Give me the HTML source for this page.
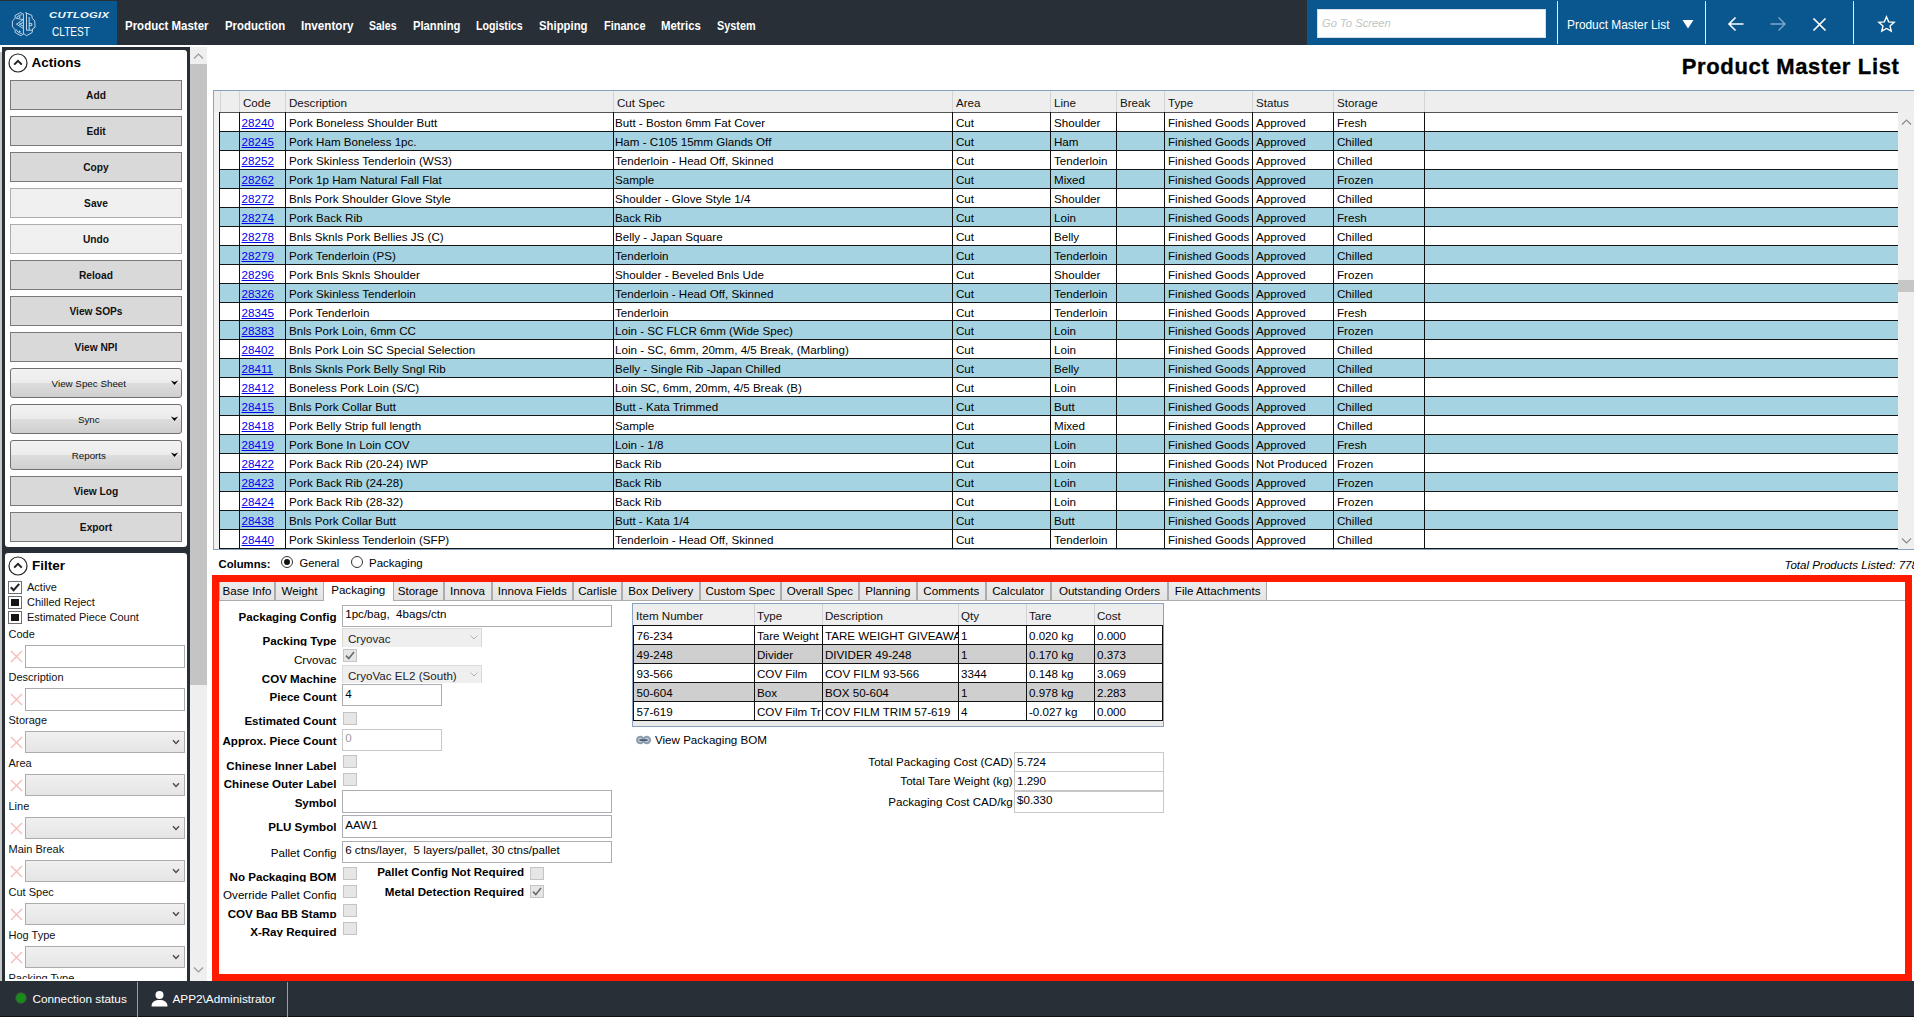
<!DOCTYPE html><html><head><meta charset="utf-8"><style>
*{box-sizing:border-box;margin:0;padding:0}
html,body{width:1914px;height:1017px;overflow:hidden;background:#fff;font-family:"Liberation Sans", sans-serif;color:#000;position:relative}
.abs{position:absolute}
.t{position:absolute;white-space:pre;line-height:1}
.btn{position:absolute;left:10px;width:172px;height:30px;background:#d9d9d9;border:1px solid #7a7a7a}
.btn.dis{background:#f0f0f0;border-color:#adadad}
.dd{position:absolute;left:10px;width:172px;height:30px;border:1px solid #707070;border-radius:3px;background:linear-gradient(#f2f2f2 0%,#ebebeb 50%,#dddddd 51%,#cfcfcf 100%)}
.tb{position:absolute;background:#fff;border:1px solid #abadb3}
.cmb{position:absolute;border:1px solid #acacac;background:linear-gradient(#f0f0f0,#e5e5e5)}
.cb{position:absolute;width:13px;height:13px;border:1px solid #bcbcbc;background:#e6e6e6}
</style></head><body>

<div class="abs" style="left:0px;top:0px;width:1914px;height:45px;background:#282f36"></div>
<div class="abs" style="left:0px;top:1px;width:117px;height:44px;background:#0a578f"></div>
<div class="abs" style="left:1307px;top:0px;width:607px;height:45px;background:#0a578f"></div>
<svg class="abs" style="left:8px;top:8px" width="32" height="32" viewBox="0 0 32 32" fill="none" stroke="#c6dbec" stroke-width="0.95" stroke-linejoin="round" stroke-linecap="round">
<path d="M15.1 6 L12.6 4.6 L7.2 7.4 L7.1 10.4 L4.4 12.9 L4.4 18.9 L7.1 21.4 L7.2 24.5 L12.9 27.7 L15.1 26.1"/>
<path d="M17.6 4.7 L23.9 7.4 L24.2 10.5 L26.7 12.6 L27.1 19.2 L24.5 20.8 L24.2 24.5 L18.6 27.7 L16.4 26.1"/>
<path d="M15.4 6.2 L15.4 26 M18.5 5.4 L18.5 22.2 L23.8 22.2"/>
<path d="M13.4 6.8 C10.5 7.4 8.6 8.8 8.4 10.4 L15.2 11.6 M15.2 11.6 L8.4 16.2 L15.2 20.4 M15.2 14.6 L11.2 16.2 L15.2 18 M8.4 21.8 C8.8 23.6 10.6 24.8 13.4 25.4"/>
<path d="M21.2 9.4 L21.2 21.6 M21.4 15.6 L23.8 15.6 L23.8 17.6 L21.4 17.6"/>
<circle cx="11.6" cy="9.1" r="0.9" fill="#c6dbec" stroke="none"/>
<circle cx="11.6" cy="23.3" r="0.9" fill="#c6dbec" stroke="none"/>
</svg>
<div class="t" style="left:49px;top:10.8px;font-size:10.5px;font-weight:bold;font-style:italic;color:#f4f7fb;letter-spacing:0.25px;transform:scale(1.07,0.8);transform-origin:0 0">CUTLOGIX</div>
<div class="t" style="left:52px;top:25.6px;font-size:12.6px;color:#fff;transform:scaleX(0.8);transform-origin:0 0">CLTEST</div>
<div class="t" style="left:125px;top:19.72px;font-size:12.5px;font-weight:bold;color:#fff;transform:scaleX(0.918);transform-origin:0 0">Product Master</div>
<div class="t" style="left:224.7px;top:19.72px;font-size:12.5px;font-weight:bold;color:#fff;transform:scaleX(0.911);transform-origin:0 0">Production</div>
<div class="t" style="left:300.5px;top:19.72px;font-size:12.5px;font-weight:bold;color:#fff;transform:scaleX(0.933);transform-origin:0 0">Inventory</div>
<div class="t" style="left:368.8px;top:19.72px;font-size:12.5px;font-weight:bold;color:#fff;transform:scaleX(0.841);transform-origin:0 0">Sales</div>
<div class="t" style="left:412.6px;top:19.72px;font-size:12.5px;font-weight:bold;color:#fff;transform:scaleX(0.898);transform-origin:0 0">Planning</div>
<div class="t" style="left:476.2px;top:19.72px;font-size:12.5px;font-weight:bold;color:#fff;transform:scaleX(0.851);transform-origin:0 0">Logistics</div>
<div class="t" style="left:539px;top:19.72px;font-size:12.5px;font-weight:bold;color:#fff;transform:scaleX(0.908);transform-origin:0 0">Shipping</div>
<div class="t" style="left:603.5px;top:19.72px;font-size:12.5px;font-weight:bold;color:#fff;transform:scaleX(0.879);transform-origin:0 0">Finance</div>
<div class="t" style="left:661.3px;top:19.72px;font-size:12.5px;font-weight:bold;color:#fff;transform:scaleX(0.911);transform-origin:0 0">Metrics</div>
<div class="t" style="left:717.2px;top:19.72px;font-size:12.5px;font-weight:bold;color:#fff;transform:scaleX(0.867);transform-origin:0 0">System</div>
<div class="abs" style="left:1317px;top:9px;width:229px;height:29px;background:#fff;border:1px solid #d6dde6"></div>
<div class="t" style="font-size:11.2px;font-weight:normal;color:#000;top:18.02px;left:1322px;font-style:italic;color:#c3c3c3;">Go To Screen</div>
<div class="abs" style="left:1557px;top:1px;width:1px;height:43px;background:#e8eef5"></div>
<div class="abs" style="left:1705px;top:1px;width:1px;height:43px;background:#e8eef5"></div>
<div class="abs" style="left:1853px;top:1px;width:1px;height:43px;background:#e8eef5"></div>
<div class="t" style="font-size:11.9px;font-weight:normal;color:#fff;top:19.73px;left:1567px;">Product Master List</div>
<svg class="abs" style="left:1682px;top:19px" width="12" height="10" viewBox="0 0 12 10"><path d="M0.5 1 L11.5 1 L6 9.5 Z" fill="#fff"/></svg>
<svg class="abs" style="left:1726px;top:15px" width="20" height="18" viewBox="0 0 20 18" fill="none" stroke="#fff" stroke-width="1.6"><path d="M17.5 9 L3 9 M9.5 2.5 L3 9 L9.5 15.5"/></svg>
<svg class="abs" style="left:1768px;top:15px" width="20" height="18" viewBox="0 0 20 18" fill="none" stroke="#7fa6c9" stroke-width="1.4"><path d="M2.5 9 L17 9 M10.5 2.5 L17 9 L10.5 15.5"/></svg>
<svg class="abs" style="left:1811px;top:16px" width="17" height="17" viewBox="0 0 17 17" fill="none" stroke="#fff" stroke-width="1.7"><path d="M2.5 2.5 L14.5 14.5 M14.5 2.5 L2.5 14.5"/></svg>
<svg class="abs" style="left:1877px;top:15px" width="19" height="18" viewBox="0 0 21 20" fill="none" stroke="#fff" stroke-width="1.5" stroke-linejoin="miter"><path d="M10.5 2 L12.9 7.6 L19 8.1 L14.4 12.1 L15.8 18 L10.5 14.9 L5.2 18 L6.6 12.1 L2 8.1 L8.1 7.6 Z"/></svg>
<div class="abs" style="left:0px;top:981px;width:1914px;height:36px;background:#282f36"></div>
<div class="abs" style="left:0px;top:1016px;width:1914px;height:1px;background:#111"></div>
<div class="abs" style="left:15px;top:992px;width:12px;height:12px;border-radius:50%;background:#1a8a1a;border:1px solid #3c4148"></div>
<div class="t" style="font-size:11.8px;font-weight:normal;color:#fff;top:994.01px;left:32.4px;">Connection status</div>
<div class="abs" style="left:137px;top:982px;width:1px;height:35px;background:#9aa0a6"></div>
<svg class="abs" style="left:151px;top:990px" width="17" height="17" viewBox="0 0 17 17" fill="#fff"><circle cx="8.5" cy="5" r="4"/><path d="M0.5 16.5 C0.5 11.5 4 10 8.5 10 C13 10 16.5 11.5 16.5 16.5 Z"/></svg>
<div class="t" style="font-size:11.8px;font-weight:normal;color:#fff;top:994.01px;left:172.4px;">APP2\Administrator</div>
<div class="abs" style="left:287px;top:982px;width:1px;height:35px;background:#9aa0a6"></div>
<div class="abs" style="left:0px;top:52px;width:2px;height:929px;background:#c8c8c8"></div>
<div class="abs" style="left:2px;top:47px;width:188px;height:934px;background:#272e35"></div>
<div class="abs" style="left:5px;top:50px;width:182px;height:497px;background:#fff;border-radius:3px"></div>
<div class="abs" style="left:5px;top:553px;width:182px;height:428px;background:#fff;border-radius:3px 3px 0 0"></div>
<div class="abs" style="left:190px;top:47px;width:17px;height:934px;background:#efefef"></div>
<div class="abs" style="left:190px;top:64px;width:17px;height:621px;background:#c4c4c4"></div>
<svg class="abs" style="left:193px;top:52px" width="11" height="8" viewBox="0 0 11 8" fill="none" stroke="#9a9a9a" stroke-width="1.2"><path d="M1 6.5 L5.5 2 L10 6.5"/></svg>
<svg class="abs" style="left:193px;top:966px" width="11" height="8" viewBox="0 0 11 8" fill="none" stroke="#9a9a9a" stroke-width="1.2"><path d="M1 1.5 L5.5 6 L10 1.5"/></svg>
<svg class="abs" style="left:8px;top:53px" width="20" height="20" viewBox="0 0 20 20" fill="none" stroke="#222" stroke-width="1.2"><circle cx="10" cy="10" r="9"/><path d="M6.2 11.6 L10 7.8 L13.8 11.6" stroke-width="2"/></svg>
<div class="t" style="font-size:13.5px;font-weight:bold;color:#000;top:56.47px;left:31.5px;">Actions</div>
<div class="btn" style="top:80px"></div>
<div class="t" style="font-size:10.2px;font-weight:bold;color:#111;top:90.87px;left:-204px;width:600px;text-align:center;">Add</div>
<div class="btn" style="top:116px"></div>
<div class="t" style="font-size:10.2px;font-weight:bold;color:#111;top:126.87px;left:-204px;width:600px;text-align:center;">Edit</div>
<div class="btn" style="top:152px"></div>
<div class="t" style="font-size:10.2px;font-weight:bold;color:#111;top:162.87px;left:-204px;width:600px;text-align:center;">Copy</div>
<div class="btn dis" style="top:188px"></div>
<div class="t" style="font-size:10.2px;font-weight:bold;color:#111;top:198.87px;left:-204px;width:600px;text-align:center;">Save</div>
<div class="btn dis" style="top:224px"></div>
<div class="t" style="font-size:10.2px;font-weight:bold;color:#111;top:234.87px;left:-204px;width:600px;text-align:center;">Undo</div>
<div class="btn" style="top:260px"></div>
<div class="t" style="font-size:10.2px;font-weight:bold;color:#111;top:270.87px;left:-204px;width:600px;text-align:center;">Reload</div>
<div class="btn" style="top:296px"></div>
<div class="t" style="font-size:10.2px;font-weight:bold;color:#111;top:306.87px;left:-204px;width:600px;text-align:center;">View SOPs</div>
<div class="btn" style="top:332px"></div>
<div class="t" style="font-size:10.2px;font-weight:bold;color:#111;top:342.87px;left:-204px;width:600px;text-align:center;">View NPI</div>
<div class="dd" style="top:368px"></div>
<div class="t" style="font-size:9.8px;font-weight:normal;color:#111;top:378.70px;left:-211.2px;width:600px;text-align:center;">View Spec Sheet</div>
<svg class="abs" style="left:170px;top:380px" width="9" height="6" viewBox="0 0 9 6"><path d="M0.8 0.6 L4.5 1.9 L8.2 0.6 L4.5 5.0 Z" fill="#000"/></svg>
<div class="dd" style="top:404px"></div>
<div class="t" style="font-size:9.8px;font-weight:normal;color:#111;top:414.70px;left:-211.2px;width:600px;text-align:center;">Sync</div>
<svg class="abs" style="left:170px;top:416px" width="9" height="6" viewBox="0 0 9 6"><path d="M0.8 0.6 L4.5 1.9 L8.2 0.6 L4.5 5.0 Z" fill="#000"/></svg>
<div class="dd" style="top:440px"></div>
<div class="t" style="font-size:9.8px;font-weight:normal;color:#111;top:450.70px;left:-211.2px;width:600px;text-align:center;">Reports</div>
<svg class="abs" style="left:170px;top:452px" width="9" height="6" viewBox="0 0 9 6"><path d="M0.8 0.6 L4.5 1.9 L8.2 0.6 L4.5 5.0 Z" fill="#000"/></svg>
<div class="btn" style="top:476px"></div>
<div class="t" style="font-size:10.2px;font-weight:bold;color:#111;top:486.87px;left:-204px;width:600px;text-align:center;">View Log</div>
<div class="btn" style="top:512px"></div>
<div class="t" style="font-size:10.2px;font-weight:bold;color:#111;top:522.87px;left:-204px;width:600px;text-align:center;">Export</div>
<svg class="abs" style="left:8px;top:556px" width="20" height="20" viewBox="0 0 20 20" fill="none" stroke="#222" stroke-width="1.2"><circle cx="10" cy="10" r="9"/><path d="M6.2 11.6 L10 7.8 L13.8 11.6" stroke-width="2"/></svg>
<div class="t" style="font-size:13.5px;font-weight:bold;color:#000;top:559.37px;left:32px;">Filter</div>
<div class="abs" style="left:8px;top:581px;width:14px;height:13px;border:1px solid #6e6e6e;background:#fff"></div>
<svg class="abs" style="left:8px;top:581px" width="14" height="13" viewBox="0 0 14 13" fill="none" stroke="#222" stroke-width="2"><path d="M2.8 6.2 L5.6 9.2 L11.2 2.8"/></svg>
<div class="t" style="font-size:11px;font-weight:normal;color:#111;top:581.89px;left:27px;">Active</div>
<div class="abs" style="left:8px;top:596px;width:14px;height:13px;border:1px solid #6e6e6e;background:#fff"></div>
<div class="abs" style="left:11px;top:599px;width:8px;height:7px;background:#151515"></div>
<div class="t" style="font-size:11px;font-weight:normal;color:#111;top:596.89px;left:27px;">Chilled Reject</div>
<div class="abs" style="left:8px;top:611px;width:14px;height:13px;border:1px solid #6e6e6e;background:#fff"></div>
<div class="abs" style="left:11px;top:614px;width:8px;height:7px;background:#151515"></div>
<div class="t" style="font-size:11px;font-weight:normal;color:#111;top:611.89px;left:27px;">Estimated Piece Count</div>
<div class="t" style="font-size:11px;font-weight:normal;color:#111;top:629.49px;left:8.5px;">Code</div>
<div class="tb" style="left:25px;top:645px;width:160px;height:23px;border-color:#a9abb0"></div>
<svg class="abs" style="left:10px;top:650px" width="13" height="13" viewBox="0 0 13 13" fill="none" stroke="#f7b9b5" stroke-width="1.3"><path d="M1 1 L12 12 M12 1 L1 12"/></svg>
<div class="t" style="font-size:11px;font-weight:normal;color:#111;top:672.49px;left:8.5px;">Description</div>
<div class="tb" style="left:25px;top:688px;width:160px;height:23px;border-color:#a9abb0"></div>
<svg class="abs" style="left:10px;top:693px" width="13" height="13" viewBox="0 0 13 13" fill="none" stroke="#f7b9b5" stroke-width="1.3"><path d="M1 1 L12 12 M12 1 L1 12"/></svg>
<div class="t" style="font-size:11px;font-weight:normal;color:#111;top:715.49px;left:8.5px;">Storage</div>
<div class="cmb" style="left:25px;top:731px;width:160px;height:22px"></div>
<svg class="abs" style="left:172px;top:739px" width="8" height="6" viewBox="0 0 8 6" fill="none" stroke="#4a4a4a" stroke-width="1.4"><path d="M1 1.2 L4 4.4 L7 1.2"/></svg>
<svg class="abs" style="left:10px;top:736px" width="13" height="13" viewBox="0 0 13 13" fill="none" stroke="#f7b9b5" stroke-width="1.3"><path d="M1 1 L12 12 M12 1 L1 12"/></svg>
<div class="t" style="font-size:11px;font-weight:normal;color:#111;top:758.49px;left:8.5px;">Area</div>
<div class="cmb" style="left:25px;top:774px;width:160px;height:22px"></div>
<svg class="abs" style="left:172px;top:782px" width="8" height="6" viewBox="0 0 8 6" fill="none" stroke="#4a4a4a" stroke-width="1.4"><path d="M1 1.2 L4 4.4 L7 1.2"/></svg>
<svg class="abs" style="left:10px;top:779px" width="13" height="13" viewBox="0 0 13 13" fill="none" stroke="#f7b9b5" stroke-width="1.3"><path d="M1 1 L12 12 M12 1 L1 12"/></svg>
<div class="t" style="font-size:11px;font-weight:normal;color:#111;top:801.49px;left:8.5px;">Line</div>
<div class="cmb" style="left:25px;top:817px;width:160px;height:22px"></div>
<svg class="abs" style="left:172px;top:825px" width="8" height="6" viewBox="0 0 8 6" fill="none" stroke="#4a4a4a" stroke-width="1.4"><path d="M1 1.2 L4 4.4 L7 1.2"/></svg>
<svg class="abs" style="left:10px;top:822px" width="13" height="13" viewBox="0 0 13 13" fill="none" stroke="#f7b9b5" stroke-width="1.3"><path d="M1 1 L12 12 M12 1 L1 12"/></svg>
<div class="t" style="font-size:11px;font-weight:normal;color:#111;top:844.49px;left:8.5px;">Main Break</div>
<div class="cmb" style="left:25px;top:860px;width:160px;height:22px"></div>
<svg class="abs" style="left:172px;top:868px" width="8" height="6" viewBox="0 0 8 6" fill="none" stroke="#4a4a4a" stroke-width="1.4"><path d="M1 1.2 L4 4.4 L7 1.2"/></svg>
<svg class="abs" style="left:10px;top:865px" width="13" height="13" viewBox="0 0 13 13" fill="none" stroke="#f7b9b5" stroke-width="1.3"><path d="M1 1 L12 12 M12 1 L1 12"/></svg>
<div class="t" style="font-size:11px;font-weight:normal;color:#111;top:887.49px;left:8.5px;">Cut Spec</div>
<div class="cmb" style="left:25px;top:903px;width:160px;height:22px"></div>
<svg class="abs" style="left:172px;top:911px" width="8" height="6" viewBox="0 0 8 6" fill="none" stroke="#4a4a4a" stroke-width="1.4"><path d="M1 1.2 L4 4.4 L7 1.2"/></svg>
<svg class="abs" style="left:10px;top:908px" width="13" height="13" viewBox="0 0 13 13" fill="none" stroke="#f7b9b5" stroke-width="1.3"><path d="M1 1 L12 12 M12 1 L1 12"/></svg>
<div class="t" style="font-size:11px;font-weight:normal;color:#111;top:930.49px;left:8.5px;">Hog Type</div>
<div class="cmb" style="left:25px;top:946px;width:160px;height:22px"></div>
<svg class="abs" style="left:172px;top:954px" width="8" height="6" viewBox="0 0 8 6" fill="none" stroke="#4a4a4a" stroke-width="1.4"><path d="M1 1.2 L4 4.4 L7 1.2"/></svg>
<svg class="abs" style="left:10px;top:951px" width="13" height="13" viewBox="0 0 13 13" fill="none" stroke="#f7b9b5" stroke-width="1.3"><path d="M1 1 L12 12 M12 1 L1 12"/></svg>
<div class="abs" style="left:5px;top:955px;width:182px;height:24.3px;overflow:hidden">
<div class="t" style="left:3.5px;top:18.49px;font-size:11px;color:#111">Packing Type</div>
</div>
<div class="t" style="font-size:22px;font-weight:bold;color:#000;top:55.68px;right:14.400000000000091px;text-align:right;letter-spacing:0.66px;-webkit-text-stroke:0.35px #000;">Product Master List</div>
<div class="abs" style="left:213px;top:90px;width:1701px;height:460px;border:1px solid #8aa2bf;border-right:none;background:#fff"></div>
<div class="abs" style="left:214px;top:91px;width:1700px;height:21px;background:#eeeeee"></div>
<div class="abs" style="left:214px;top:112px;width:6px;height:437px;background:#f2f2f2"></div>
<div class="abs" style="left:220px;top:91px;width:1px;height:21px;background:#d4d4d4"></div>
<div class="abs" style="left:239px;top:91px;width:1px;height:21px;background:#d4d4d4"></div>
<div class="abs" style="left:285px;top:91px;width:1px;height:21px;background:#d4d4d4"></div>
<div class="abs" style="left:613px;top:91px;width:1px;height:21px;background:#d4d4d4"></div>
<div class="abs" style="left:952px;top:91px;width:1px;height:21px;background:#d4d4d4"></div>
<div class="abs" style="left:1050px;top:91px;width:1px;height:21px;background:#d4d4d4"></div>
<div class="abs" style="left:1116px;top:91px;width:1px;height:21px;background:#d4d4d4"></div>
<div class="abs" style="left:1164px;top:91px;width:1px;height:21px;background:#d4d4d4"></div>
<div class="abs" style="left:1252px;top:91px;width:1px;height:21px;background:#d4d4d4"></div>
<div class="abs" style="left:1333px;top:91px;width:1px;height:21px;background:#d4d4d4"></div>
<div class="abs" style="left:1424px;top:91px;width:1px;height:21px;background:#d4d4d4"></div>
<div class="t" style="font-size:11.6px;font-weight:normal;color:#111;top:97.18px;left:243px;">Code</div>
<div class="t" style="font-size:11.6px;font-weight:normal;color:#111;top:97.18px;left:289px;">Description</div>
<div class="t" style="font-size:11.6px;font-weight:normal;color:#111;top:97.18px;left:617px;">Cut Spec</div>
<div class="t" style="font-size:11.6px;font-weight:normal;color:#111;top:97.18px;left:956px;">Area</div>
<div class="t" style="font-size:11.6px;font-weight:normal;color:#111;top:97.18px;left:1054px;">Line</div>
<div class="t" style="font-size:11.6px;font-weight:normal;color:#111;top:97.18px;left:1120px;">Break</div>
<div class="t" style="font-size:11.6px;font-weight:normal;color:#111;top:97.18px;left:1168px;">Type</div>
<div class="t" style="font-size:11.6px;font-weight:normal;color:#111;top:97.18px;left:1256px;">Status</div>
<div class="t" style="font-size:11.6px;font-weight:normal;color:#111;top:97.18px;left:1337px;">Storage</div>
<div class="abs" style="left:220px;top:131px;width:1678px;height:19px;background:#a6d3e1"></div>
<div class="abs" style="left:220px;top:169px;width:1678px;height:19px;background:#a6d3e1"></div>
<div class="abs" style="left:220px;top:207px;width:1678px;height:19px;background:#a6d3e1"></div>
<div class="abs" style="left:220px;top:245px;width:1678px;height:19px;background:#a6d3e1"></div>
<div class="abs" style="left:220px;top:283px;width:1678px;height:19px;background:#a6d3e1"></div>
<div class="abs" style="left:220px;top:320px;width:1678px;height:19px;background:#a6d3e1"></div>
<div class="abs" style="left:220px;top:358px;width:1678px;height:19px;background:#a6d3e1"></div>
<div class="abs" style="left:220px;top:396px;width:1678px;height:19px;background:#a6d3e1"></div>
<div class="abs" style="left:220px;top:434px;width:1678px;height:19px;background:#a6d3e1"></div>
<div class="abs" style="left:220px;top:472px;width:1678px;height:19px;background:#a6d3e1"></div>
<div class="abs" style="left:220px;top:510px;width:1678px;height:19px;background:#a6d3e1"></div>
<div class="t" style="font-size:11.6px;font-weight:normal;color:#0000ee;top:117.18px;left:241.6px;text-decoration:underline;">28240</div>
<div class="abs" style="left:286px;top:113px;width:327px;height:18px;overflow:hidden">
<div class="t" style="left:3px;top:4.18px;font-size:11.6px;color:#000">Pork Boneless Shoulder Butt</div>
</div>
<div class="abs" style="left:614px;top:113px;width:338px;height:18px;overflow:hidden">
<div class="t" style="left:1px;top:4.18px;font-size:11.6px;color:#000">Butt - Boston 6mm Fat Cover</div>
</div>
<div class="abs" style="left:953px;top:113px;width:97px;height:18px;overflow:hidden">
<div class="t" style="left:3px;top:4.18px;font-size:11.6px;color:#000">Cut</div>
</div>
<div class="abs" style="left:1051px;top:113px;width:65px;height:18px;overflow:hidden">
<div class="t" style="left:3px;top:4.18px;font-size:11.6px;color:#000">Shoulder</div>
</div>
<div class="abs" style="left:1165px;top:113px;width:87px;height:18px;overflow:hidden">
<div class="t" style="left:3px;top:4.18px;font-size:11.6px;color:#000">Finished Goods</div>
</div>
<div class="abs" style="left:1253px;top:113px;width:80px;height:18px;overflow:hidden">
<div class="t" style="left:3px;top:4.18px;font-size:11.6px;color:#000">Approved</div>
</div>
<div class="abs" style="left:1334px;top:113px;width:90px;height:18px;overflow:hidden">
<div class="t" style="left:3px;top:4.18px;font-size:11.6px;color:#000">Fresh</div>
</div>
<div class="t" style="font-size:11.6px;font-weight:normal;color:#0000ee;top:136.18px;left:241.6px;text-decoration:underline;">28245</div>
<div class="abs" style="left:286px;top:132px;width:327px;height:18px;overflow:hidden">
<div class="t" style="left:3px;top:4.18px;font-size:11.6px;color:#000">Pork Ham Boneless 1pc.</div>
</div>
<div class="abs" style="left:614px;top:132px;width:338px;height:18px;overflow:hidden">
<div class="t" style="left:1px;top:4.18px;font-size:11.6px;color:#000">Ham - C105 15mm Glands Off</div>
</div>
<div class="abs" style="left:953px;top:132px;width:97px;height:18px;overflow:hidden">
<div class="t" style="left:3px;top:4.18px;font-size:11.6px;color:#000">Cut</div>
</div>
<div class="abs" style="left:1051px;top:132px;width:65px;height:18px;overflow:hidden">
<div class="t" style="left:3px;top:4.18px;font-size:11.6px;color:#000">Ham</div>
</div>
<div class="abs" style="left:1165px;top:132px;width:87px;height:18px;overflow:hidden">
<div class="t" style="left:3px;top:4.18px;font-size:11.6px;color:#000">Finished Goods</div>
</div>
<div class="abs" style="left:1253px;top:132px;width:80px;height:18px;overflow:hidden">
<div class="t" style="left:3px;top:4.18px;font-size:11.6px;color:#000">Approved</div>
</div>
<div class="abs" style="left:1334px;top:132px;width:90px;height:18px;overflow:hidden">
<div class="t" style="left:3px;top:4.18px;font-size:11.6px;color:#000">Chilled</div>
</div>
<div class="t" style="font-size:11.6px;font-weight:normal;color:#0000ee;top:155.18px;left:241.6px;text-decoration:underline;">28252</div>
<div class="abs" style="left:286px;top:151px;width:327px;height:18px;overflow:hidden">
<div class="t" style="left:3px;top:4.18px;font-size:11.6px;color:#000">Pork Skinless Tenderloin (WS3)</div>
</div>
<div class="abs" style="left:614px;top:151px;width:338px;height:18px;overflow:hidden">
<div class="t" style="left:1px;top:4.18px;font-size:11.6px;color:#000">Tenderloin - Head Off, Skinned</div>
</div>
<div class="abs" style="left:953px;top:151px;width:97px;height:18px;overflow:hidden">
<div class="t" style="left:3px;top:4.18px;font-size:11.6px;color:#000">Cut</div>
</div>
<div class="abs" style="left:1051px;top:151px;width:65px;height:18px;overflow:hidden">
<div class="t" style="left:3px;top:4.18px;font-size:11.6px;color:#000">Tenderloin</div>
</div>
<div class="abs" style="left:1165px;top:151px;width:87px;height:18px;overflow:hidden">
<div class="t" style="left:3px;top:4.18px;font-size:11.6px;color:#000">Finished Goods</div>
</div>
<div class="abs" style="left:1253px;top:151px;width:80px;height:18px;overflow:hidden">
<div class="t" style="left:3px;top:4.18px;font-size:11.6px;color:#000">Approved</div>
</div>
<div class="abs" style="left:1334px;top:151px;width:90px;height:18px;overflow:hidden">
<div class="t" style="left:3px;top:4.18px;font-size:11.6px;color:#000">Chilled</div>
</div>
<div class="t" style="font-size:11.6px;font-weight:normal;color:#0000ee;top:174.18px;left:241.6px;text-decoration:underline;">28262</div>
<div class="abs" style="left:286px;top:170px;width:327px;height:18px;overflow:hidden">
<div class="t" style="left:3px;top:4.18px;font-size:11.6px;color:#000">Pork 1p Ham Natural Fall Flat</div>
</div>
<div class="abs" style="left:614px;top:170px;width:338px;height:18px;overflow:hidden">
<div class="t" style="left:1px;top:4.18px;font-size:11.6px;color:#000">Sample</div>
</div>
<div class="abs" style="left:953px;top:170px;width:97px;height:18px;overflow:hidden">
<div class="t" style="left:3px;top:4.18px;font-size:11.6px;color:#000">Cut</div>
</div>
<div class="abs" style="left:1051px;top:170px;width:65px;height:18px;overflow:hidden">
<div class="t" style="left:3px;top:4.18px;font-size:11.6px;color:#000">Mixed</div>
</div>
<div class="abs" style="left:1165px;top:170px;width:87px;height:18px;overflow:hidden">
<div class="t" style="left:3px;top:4.18px;font-size:11.6px;color:#000">Finished Goods</div>
</div>
<div class="abs" style="left:1253px;top:170px;width:80px;height:18px;overflow:hidden">
<div class="t" style="left:3px;top:4.18px;font-size:11.6px;color:#000">Approved</div>
</div>
<div class="abs" style="left:1334px;top:170px;width:90px;height:18px;overflow:hidden">
<div class="t" style="left:3px;top:4.18px;font-size:11.6px;color:#000">Frozen</div>
</div>
<div class="t" style="font-size:11.6px;font-weight:normal;color:#0000ee;top:193.18px;left:241.6px;text-decoration:underline;">28272</div>
<div class="abs" style="left:286px;top:189px;width:327px;height:18px;overflow:hidden">
<div class="t" style="left:3px;top:4.18px;font-size:11.6px;color:#000">Bnls Pork Shoulder Glove Style</div>
</div>
<div class="abs" style="left:614px;top:189px;width:338px;height:18px;overflow:hidden">
<div class="t" style="left:1px;top:4.18px;font-size:11.6px;color:#000">Shoulder - Glove Style 1/4</div>
</div>
<div class="abs" style="left:953px;top:189px;width:97px;height:18px;overflow:hidden">
<div class="t" style="left:3px;top:4.18px;font-size:11.6px;color:#000">Cut</div>
</div>
<div class="abs" style="left:1051px;top:189px;width:65px;height:18px;overflow:hidden">
<div class="t" style="left:3px;top:4.18px;font-size:11.6px;color:#000">Shoulder</div>
</div>
<div class="abs" style="left:1165px;top:189px;width:87px;height:18px;overflow:hidden">
<div class="t" style="left:3px;top:4.18px;font-size:11.6px;color:#000">Finished Goods</div>
</div>
<div class="abs" style="left:1253px;top:189px;width:80px;height:18px;overflow:hidden">
<div class="t" style="left:3px;top:4.18px;font-size:11.6px;color:#000">Approved</div>
</div>
<div class="abs" style="left:1334px;top:189px;width:90px;height:18px;overflow:hidden">
<div class="t" style="left:3px;top:4.18px;font-size:11.6px;color:#000">Chilled</div>
</div>
<div class="t" style="font-size:11.6px;font-weight:normal;color:#0000ee;top:212.18px;left:241.6px;text-decoration:underline;">28274</div>
<div class="abs" style="left:286px;top:208px;width:327px;height:18px;overflow:hidden">
<div class="t" style="left:3px;top:4.18px;font-size:11.6px;color:#000">Pork Back Rib</div>
</div>
<div class="abs" style="left:614px;top:208px;width:338px;height:18px;overflow:hidden">
<div class="t" style="left:1px;top:4.18px;font-size:11.6px;color:#000">Back Rib</div>
</div>
<div class="abs" style="left:953px;top:208px;width:97px;height:18px;overflow:hidden">
<div class="t" style="left:3px;top:4.18px;font-size:11.6px;color:#000">Cut</div>
</div>
<div class="abs" style="left:1051px;top:208px;width:65px;height:18px;overflow:hidden">
<div class="t" style="left:3px;top:4.18px;font-size:11.6px;color:#000">Loin</div>
</div>
<div class="abs" style="left:1165px;top:208px;width:87px;height:18px;overflow:hidden">
<div class="t" style="left:3px;top:4.18px;font-size:11.6px;color:#000">Finished Goods</div>
</div>
<div class="abs" style="left:1253px;top:208px;width:80px;height:18px;overflow:hidden">
<div class="t" style="left:3px;top:4.18px;font-size:11.6px;color:#000">Approved</div>
</div>
<div class="abs" style="left:1334px;top:208px;width:90px;height:18px;overflow:hidden">
<div class="t" style="left:3px;top:4.18px;font-size:11.6px;color:#000">Fresh</div>
</div>
<div class="t" style="font-size:11.6px;font-weight:normal;color:#0000ee;top:231.18px;left:241.6px;text-decoration:underline;">28278</div>
<div class="abs" style="left:286px;top:227px;width:327px;height:18px;overflow:hidden">
<div class="t" style="left:3px;top:4.18px;font-size:11.6px;color:#000">Bnls Sknls Pork Bellies JS (C)</div>
</div>
<div class="abs" style="left:614px;top:227px;width:338px;height:18px;overflow:hidden">
<div class="t" style="left:1px;top:4.18px;font-size:11.6px;color:#000">Belly - Japan Square</div>
</div>
<div class="abs" style="left:953px;top:227px;width:97px;height:18px;overflow:hidden">
<div class="t" style="left:3px;top:4.18px;font-size:11.6px;color:#000">Cut</div>
</div>
<div class="abs" style="left:1051px;top:227px;width:65px;height:18px;overflow:hidden">
<div class="t" style="left:3px;top:4.18px;font-size:11.6px;color:#000">Belly</div>
</div>
<div class="abs" style="left:1165px;top:227px;width:87px;height:18px;overflow:hidden">
<div class="t" style="left:3px;top:4.18px;font-size:11.6px;color:#000">Finished Goods</div>
</div>
<div class="abs" style="left:1253px;top:227px;width:80px;height:18px;overflow:hidden">
<div class="t" style="left:3px;top:4.18px;font-size:11.6px;color:#000">Approved</div>
</div>
<div class="abs" style="left:1334px;top:227px;width:90px;height:18px;overflow:hidden">
<div class="t" style="left:3px;top:4.18px;font-size:11.6px;color:#000">Chilled</div>
</div>
<div class="t" style="font-size:11.6px;font-weight:normal;color:#0000ee;top:250.18px;left:241.6px;text-decoration:underline;">28279</div>
<div class="abs" style="left:286px;top:246px;width:327px;height:18px;overflow:hidden">
<div class="t" style="left:3px;top:4.18px;font-size:11.6px;color:#000">Pork Tenderloin (PS)</div>
</div>
<div class="abs" style="left:614px;top:246px;width:338px;height:18px;overflow:hidden">
<div class="t" style="left:1px;top:4.18px;font-size:11.6px;color:#000">Tenderloin</div>
</div>
<div class="abs" style="left:953px;top:246px;width:97px;height:18px;overflow:hidden">
<div class="t" style="left:3px;top:4.18px;font-size:11.6px;color:#000">Cut</div>
</div>
<div class="abs" style="left:1051px;top:246px;width:65px;height:18px;overflow:hidden">
<div class="t" style="left:3px;top:4.18px;font-size:11.6px;color:#000">Tenderloin</div>
</div>
<div class="abs" style="left:1165px;top:246px;width:87px;height:18px;overflow:hidden">
<div class="t" style="left:3px;top:4.18px;font-size:11.6px;color:#000">Finished Goods</div>
</div>
<div class="abs" style="left:1253px;top:246px;width:80px;height:18px;overflow:hidden">
<div class="t" style="left:3px;top:4.18px;font-size:11.6px;color:#000">Approved</div>
</div>
<div class="abs" style="left:1334px;top:246px;width:90px;height:18px;overflow:hidden">
<div class="t" style="left:3px;top:4.18px;font-size:11.6px;color:#000">Chilled</div>
</div>
<div class="t" style="font-size:11.6px;font-weight:normal;color:#0000ee;top:269.18px;left:241.6px;text-decoration:underline;">28296</div>
<div class="abs" style="left:286px;top:265px;width:327px;height:18px;overflow:hidden">
<div class="t" style="left:3px;top:4.18px;font-size:11.6px;color:#000">Pork Bnls Sknls Shoulder</div>
</div>
<div class="abs" style="left:614px;top:265px;width:338px;height:18px;overflow:hidden">
<div class="t" style="left:1px;top:4.18px;font-size:11.6px;color:#000">Shoulder - Beveled Bnls Ude</div>
</div>
<div class="abs" style="left:953px;top:265px;width:97px;height:18px;overflow:hidden">
<div class="t" style="left:3px;top:4.18px;font-size:11.6px;color:#000">Cut</div>
</div>
<div class="abs" style="left:1051px;top:265px;width:65px;height:18px;overflow:hidden">
<div class="t" style="left:3px;top:4.18px;font-size:11.6px;color:#000">Shoulder</div>
</div>
<div class="abs" style="left:1165px;top:265px;width:87px;height:18px;overflow:hidden">
<div class="t" style="left:3px;top:4.18px;font-size:11.6px;color:#000">Finished Goods</div>
</div>
<div class="abs" style="left:1253px;top:265px;width:80px;height:18px;overflow:hidden">
<div class="t" style="left:3px;top:4.18px;font-size:11.6px;color:#000">Approved</div>
</div>
<div class="abs" style="left:1334px;top:265px;width:90px;height:18px;overflow:hidden">
<div class="t" style="left:3px;top:4.18px;font-size:11.6px;color:#000">Frozen</div>
</div>
<div class="t" style="font-size:11.6px;font-weight:normal;color:#0000ee;top:288.18px;left:241.6px;text-decoration:underline;">28326</div>
<div class="abs" style="left:286px;top:284px;width:327px;height:18px;overflow:hidden">
<div class="t" style="left:3px;top:4.18px;font-size:11.6px;color:#000">Pork Skinless Tenderloin</div>
</div>
<div class="abs" style="left:614px;top:284px;width:338px;height:18px;overflow:hidden">
<div class="t" style="left:1px;top:4.18px;font-size:11.6px;color:#000">Tenderloin - Head Off, Skinned</div>
</div>
<div class="abs" style="left:953px;top:284px;width:97px;height:18px;overflow:hidden">
<div class="t" style="left:3px;top:4.18px;font-size:11.6px;color:#000">Cut</div>
</div>
<div class="abs" style="left:1051px;top:284px;width:65px;height:18px;overflow:hidden">
<div class="t" style="left:3px;top:4.18px;font-size:11.6px;color:#000">Tenderloin</div>
</div>
<div class="abs" style="left:1165px;top:284px;width:87px;height:18px;overflow:hidden">
<div class="t" style="left:3px;top:4.18px;font-size:11.6px;color:#000">Finished Goods</div>
</div>
<div class="abs" style="left:1253px;top:284px;width:80px;height:18px;overflow:hidden">
<div class="t" style="left:3px;top:4.18px;font-size:11.6px;color:#000">Approved</div>
</div>
<div class="abs" style="left:1334px;top:284px;width:90px;height:18px;overflow:hidden">
<div class="t" style="left:3px;top:4.18px;font-size:11.6px;color:#000">Chilled</div>
</div>
<div class="t" style="font-size:11.6px;font-weight:normal;color:#0000ee;top:307.18px;left:241.6px;text-decoration:underline;">28345</div>
<div class="abs" style="left:286px;top:303px;width:327px;height:18px;overflow:hidden">
<div class="t" style="left:3px;top:4.18px;font-size:11.6px;color:#000">Pork Tenderloin</div>
</div>
<div class="abs" style="left:614px;top:303px;width:338px;height:18px;overflow:hidden">
<div class="t" style="left:1px;top:4.18px;font-size:11.6px;color:#000">Tenderloin</div>
</div>
<div class="abs" style="left:953px;top:303px;width:97px;height:18px;overflow:hidden">
<div class="t" style="left:3px;top:4.18px;font-size:11.6px;color:#000">Cut</div>
</div>
<div class="abs" style="left:1051px;top:303px;width:65px;height:18px;overflow:hidden">
<div class="t" style="left:3px;top:4.18px;font-size:11.6px;color:#000">Tenderloin</div>
</div>
<div class="abs" style="left:1165px;top:303px;width:87px;height:18px;overflow:hidden">
<div class="t" style="left:3px;top:4.18px;font-size:11.6px;color:#000">Finished Goods</div>
</div>
<div class="abs" style="left:1253px;top:303px;width:80px;height:18px;overflow:hidden">
<div class="t" style="left:3px;top:4.18px;font-size:11.6px;color:#000">Approved</div>
</div>
<div class="abs" style="left:1334px;top:303px;width:90px;height:18px;overflow:hidden">
<div class="t" style="left:3px;top:4.18px;font-size:11.6px;color:#000">Fresh</div>
</div>
<div class="t" style="font-size:11.6px;font-weight:normal;color:#0000ee;top:325.18px;left:241.6px;text-decoration:underline;">28383</div>
<div class="abs" style="left:286px;top:321px;width:327px;height:18px;overflow:hidden">
<div class="t" style="left:3px;top:4.18px;font-size:11.6px;color:#000">Bnls Pork Loin, 6mm CC</div>
</div>
<div class="abs" style="left:614px;top:321px;width:338px;height:18px;overflow:hidden">
<div class="t" style="left:1px;top:4.18px;font-size:11.6px;color:#000">Loin - SC FLCR 6mm (Wide Spec)</div>
</div>
<div class="abs" style="left:953px;top:321px;width:97px;height:18px;overflow:hidden">
<div class="t" style="left:3px;top:4.18px;font-size:11.6px;color:#000">Cut</div>
</div>
<div class="abs" style="left:1051px;top:321px;width:65px;height:18px;overflow:hidden">
<div class="t" style="left:3px;top:4.18px;font-size:11.6px;color:#000">Loin</div>
</div>
<div class="abs" style="left:1165px;top:321px;width:87px;height:18px;overflow:hidden">
<div class="t" style="left:3px;top:4.18px;font-size:11.6px;color:#000">Finished Goods</div>
</div>
<div class="abs" style="left:1253px;top:321px;width:80px;height:18px;overflow:hidden">
<div class="t" style="left:3px;top:4.18px;font-size:11.6px;color:#000">Approved</div>
</div>
<div class="abs" style="left:1334px;top:321px;width:90px;height:18px;overflow:hidden">
<div class="t" style="left:3px;top:4.18px;font-size:11.6px;color:#000">Frozen</div>
</div>
<div class="t" style="font-size:11.6px;font-weight:normal;color:#0000ee;top:344.18px;left:241.6px;text-decoration:underline;">28402</div>
<div class="abs" style="left:286px;top:340px;width:327px;height:18px;overflow:hidden">
<div class="t" style="left:3px;top:4.18px;font-size:11.6px;color:#000">Bnls Pork Loin SC Special Selection</div>
</div>
<div class="abs" style="left:614px;top:340px;width:338px;height:18px;overflow:hidden">
<div class="t" style="left:1px;top:4.18px;font-size:11.6px;color:#000">Loin - SC, 6mm, 20mm, 4/5 Break, (Marbling)</div>
</div>
<div class="abs" style="left:953px;top:340px;width:97px;height:18px;overflow:hidden">
<div class="t" style="left:3px;top:4.18px;font-size:11.6px;color:#000">Cut</div>
</div>
<div class="abs" style="left:1051px;top:340px;width:65px;height:18px;overflow:hidden">
<div class="t" style="left:3px;top:4.18px;font-size:11.6px;color:#000">Loin</div>
</div>
<div class="abs" style="left:1165px;top:340px;width:87px;height:18px;overflow:hidden">
<div class="t" style="left:3px;top:4.18px;font-size:11.6px;color:#000">Finished Goods</div>
</div>
<div class="abs" style="left:1253px;top:340px;width:80px;height:18px;overflow:hidden">
<div class="t" style="left:3px;top:4.18px;font-size:11.6px;color:#000">Approved</div>
</div>
<div class="abs" style="left:1334px;top:340px;width:90px;height:18px;overflow:hidden">
<div class="t" style="left:3px;top:4.18px;font-size:11.6px;color:#000">Chilled</div>
</div>
<div class="t" style="font-size:11.6px;font-weight:normal;color:#0000ee;top:363.18px;left:241.6px;text-decoration:underline;">28411</div>
<div class="abs" style="left:286px;top:359px;width:327px;height:18px;overflow:hidden">
<div class="t" style="left:3px;top:4.18px;font-size:11.6px;color:#000">Bnls Sknls Pork Belly Sngl Rib</div>
</div>
<div class="abs" style="left:614px;top:359px;width:338px;height:18px;overflow:hidden">
<div class="t" style="left:1px;top:4.18px;font-size:11.6px;color:#000">Belly - Single Rib -Japan Chilled</div>
</div>
<div class="abs" style="left:953px;top:359px;width:97px;height:18px;overflow:hidden">
<div class="t" style="left:3px;top:4.18px;font-size:11.6px;color:#000">Cut</div>
</div>
<div class="abs" style="left:1051px;top:359px;width:65px;height:18px;overflow:hidden">
<div class="t" style="left:3px;top:4.18px;font-size:11.6px;color:#000">Belly</div>
</div>
<div class="abs" style="left:1165px;top:359px;width:87px;height:18px;overflow:hidden">
<div class="t" style="left:3px;top:4.18px;font-size:11.6px;color:#000">Finished Goods</div>
</div>
<div class="abs" style="left:1253px;top:359px;width:80px;height:18px;overflow:hidden">
<div class="t" style="left:3px;top:4.18px;font-size:11.6px;color:#000">Approved</div>
</div>
<div class="abs" style="left:1334px;top:359px;width:90px;height:18px;overflow:hidden">
<div class="t" style="left:3px;top:4.18px;font-size:11.6px;color:#000">Chilled</div>
</div>
<div class="t" style="font-size:11.6px;font-weight:normal;color:#0000ee;top:382.18px;left:241.6px;text-decoration:underline;">28412</div>
<div class="abs" style="left:286px;top:378px;width:327px;height:18px;overflow:hidden">
<div class="t" style="left:3px;top:4.18px;font-size:11.6px;color:#000">Boneless Pork Loin (S/C)</div>
</div>
<div class="abs" style="left:614px;top:378px;width:338px;height:18px;overflow:hidden">
<div class="t" style="left:1px;top:4.18px;font-size:11.6px;color:#000">Loin SC, 6mm, 20mm, 4/5 Break (B)</div>
</div>
<div class="abs" style="left:953px;top:378px;width:97px;height:18px;overflow:hidden">
<div class="t" style="left:3px;top:4.18px;font-size:11.6px;color:#000">Cut</div>
</div>
<div class="abs" style="left:1051px;top:378px;width:65px;height:18px;overflow:hidden">
<div class="t" style="left:3px;top:4.18px;font-size:11.6px;color:#000">Loin</div>
</div>
<div class="abs" style="left:1165px;top:378px;width:87px;height:18px;overflow:hidden">
<div class="t" style="left:3px;top:4.18px;font-size:11.6px;color:#000">Finished Goods</div>
</div>
<div class="abs" style="left:1253px;top:378px;width:80px;height:18px;overflow:hidden">
<div class="t" style="left:3px;top:4.18px;font-size:11.6px;color:#000">Approved</div>
</div>
<div class="abs" style="left:1334px;top:378px;width:90px;height:18px;overflow:hidden">
<div class="t" style="left:3px;top:4.18px;font-size:11.6px;color:#000">Chilled</div>
</div>
<div class="t" style="font-size:11.6px;font-weight:normal;color:#0000ee;top:401.18px;left:241.6px;text-decoration:underline;">28415</div>
<div class="abs" style="left:286px;top:397px;width:327px;height:18px;overflow:hidden">
<div class="t" style="left:3px;top:4.18px;font-size:11.6px;color:#000">Bnls Pork Collar Butt</div>
</div>
<div class="abs" style="left:614px;top:397px;width:338px;height:18px;overflow:hidden">
<div class="t" style="left:1px;top:4.18px;font-size:11.6px;color:#000">Butt - Kata Trimmed</div>
</div>
<div class="abs" style="left:953px;top:397px;width:97px;height:18px;overflow:hidden">
<div class="t" style="left:3px;top:4.18px;font-size:11.6px;color:#000">Cut</div>
</div>
<div class="abs" style="left:1051px;top:397px;width:65px;height:18px;overflow:hidden">
<div class="t" style="left:3px;top:4.18px;font-size:11.6px;color:#000">Butt</div>
</div>
<div class="abs" style="left:1165px;top:397px;width:87px;height:18px;overflow:hidden">
<div class="t" style="left:3px;top:4.18px;font-size:11.6px;color:#000">Finished Goods</div>
</div>
<div class="abs" style="left:1253px;top:397px;width:80px;height:18px;overflow:hidden">
<div class="t" style="left:3px;top:4.18px;font-size:11.6px;color:#000">Approved</div>
</div>
<div class="abs" style="left:1334px;top:397px;width:90px;height:18px;overflow:hidden">
<div class="t" style="left:3px;top:4.18px;font-size:11.6px;color:#000">Chilled</div>
</div>
<div class="t" style="font-size:11.6px;font-weight:normal;color:#0000ee;top:420.18px;left:241.6px;text-decoration:underline;">28418</div>
<div class="abs" style="left:286px;top:416px;width:327px;height:18px;overflow:hidden">
<div class="t" style="left:3px;top:4.18px;font-size:11.6px;color:#000">Pork Belly Strip full length</div>
</div>
<div class="abs" style="left:614px;top:416px;width:338px;height:18px;overflow:hidden">
<div class="t" style="left:1px;top:4.18px;font-size:11.6px;color:#000">Sample</div>
</div>
<div class="abs" style="left:953px;top:416px;width:97px;height:18px;overflow:hidden">
<div class="t" style="left:3px;top:4.18px;font-size:11.6px;color:#000">Cut</div>
</div>
<div class="abs" style="left:1051px;top:416px;width:65px;height:18px;overflow:hidden">
<div class="t" style="left:3px;top:4.18px;font-size:11.6px;color:#000">Mixed</div>
</div>
<div class="abs" style="left:1165px;top:416px;width:87px;height:18px;overflow:hidden">
<div class="t" style="left:3px;top:4.18px;font-size:11.6px;color:#000">Finished Goods</div>
</div>
<div class="abs" style="left:1253px;top:416px;width:80px;height:18px;overflow:hidden">
<div class="t" style="left:3px;top:4.18px;font-size:11.6px;color:#000">Approved</div>
</div>
<div class="abs" style="left:1334px;top:416px;width:90px;height:18px;overflow:hidden">
<div class="t" style="left:3px;top:4.18px;font-size:11.6px;color:#000">Chilled</div>
</div>
<div class="t" style="font-size:11.6px;font-weight:normal;color:#0000ee;top:439.18px;left:241.6px;text-decoration:underline;">28419</div>
<div class="abs" style="left:286px;top:435px;width:327px;height:18px;overflow:hidden">
<div class="t" style="left:3px;top:4.18px;font-size:11.6px;color:#000">Pork Bone In Loin COV</div>
</div>
<div class="abs" style="left:614px;top:435px;width:338px;height:18px;overflow:hidden">
<div class="t" style="left:1px;top:4.18px;font-size:11.6px;color:#000">Loin - 1/8</div>
</div>
<div class="abs" style="left:953px;top:435px;width:97px;height:18px;overflow:hidden">
<div class="t" style="left:3px;top:4.18px;font-size:11.6px;color:#000">Cut</div>
</div>
<div class="abs" style="left:1051px;top:435px;width:65px;height:18px;overflow:hidden">
<div class="t" style="left:3px;top:4.18px;font-size:11.6px;color:#000">Loin</div>
</div>
<div class="abs" style="left:1165px;top:435px;width:87px;height:18px;overflow:hidden">
<div class="t" style="left:3px;top:4.18px;font-size:11.6px;color:#000">Finished Goods</div>
</div>
<div class="abs" style="left:1253px;top:435px;width:80px;height:18px;overflow:hidden">
<div class="t" style="left:3px;top:4.18px;font-size:11.6px;color:#000">Approved</div>
</div>
<div class="abs" style="left:1334px;top:435px;width:90px;height:18px;overflow:hidden">
<div class="t" style="left:3px;top:4.18px;font-size:11.6px;color:#000">Fresh</div>
</div>
<div class="t" style="font-size:11.6px;font-weight:normal;color:#0000ee;top:458.18px;left:241.6px;text-decoration:underline;">28422</div>
<div class="abs" style="left:286px;top:454px;width:327px;height:18px;overflow:hidden">
<div class="t" style="left:3px;top:4.18px;font-size:11.6px;color:#000">Pork Back Rib (20-24) IWP</div>
</div>
<div class="abs" style="left:614px;top:454px;width:338px;height:18px;overflow:hidden">
<div class="t" style="left:1px;top:4.18px;font-size:11.6px;color:#000">Back Rib</div>
</div>
<div class="abs" style="left:953px;top:454px;width:97px;height:18px;overflow:hidden">
<div class="t" style="left:3px;top:4.18px;font-size:11.6px;color:#000">Cut</div>
</div>
<div class="abs" style="left:1051px;top:454px;width:65px;height:18px;overflow:hidden">
<div class="t" style="left:3px;top:4.18px;font-size:11.6px;color:#000">Loin</div>
</div>
<div class="abs" style="left:1165px;top:454px;width:87px;height:18px;overflow:hidden">
<div class="t" style="left:3px;top:4.18px;font-size:11.6px;color:#000">Finished Goods</div>
</div>
<div class="abs" style="left:1253px;top:454px;width:80px;height:18px;overflow:hidden">
<div class="t" style="left:3px;top:4.18px;font-size:11.6px;color:#000">Not Produced</div>
</div>
<div class="abs" style="left:1334px;top:454px;width:90px;height:18px;overflow:hidden">
<div class="t" style="left:3px;top:4.18px;font-size:11.6px;color:#000">Frozen</div>
</div>
<div class="t" style="font-size:11.6px;font-weight:normal;color:#0000ee;top:477.18px;left:241.6px;text-decoration:underline;">28423</div>
<div class="abs" style="left:286px;top:473px;width:327px;height:18px;overflow:hidden">
<div class="t" style="left:3px;top:4.18px;font-size:11.6px;color:#000">Pork Back Rib (24-28)</div>
</div>
<div class="abs" style="left:614px;top:473px;width:338px;height:18px;overflow:hidden">
<div class="t" style="left:1px;top:4.18px;font-size:11.6px;color:#000">Back Rib</div>
</div>
<div class="abs" style="left:953px;top:473px;width:97px;height:18px;overflow:hidden">
<div class="t" style="left:3px;top:4.18px;font-size:11.6px;color:#000">Cut</div>
</div>
<div class="abs" style="left:1051px;top:473px;width:65px;height:18px;overflow:hidden">
<div class="t" style="left:3px;top:4.18px;font-size:11.6px;color:#000">Loin</div>
</div>
<div class="abs" style="left:1165px;top:473px;width:87px;height:18px;overflow:hidden">
<div class="t" style="left:3px;top:4.18px;font-size:11.6px;color:#000">Finished Goods</div>
</div>
<div class="abs" style="left:1253px;top:473px;width:80px;height:18px;overflow:hidden">
<div class="t" style="left:3px;top:4.18px;font-size:11.6px;color:#000">Approved</div>
</div>
<div class="abs" style="left:1334px;top:473px;width:90px;height:18px;overflow:hidden">
<div class="t" style="left:3px;top:4.18px;font-size:11.6px;color:#000">Frozen</div>
</div>
<div class="t" style="font-size:11.6px;font-weight:normal;color:#0000ee;top:496.18px;left:241.6px;text-decoration:underline;">28424</div>
<div class="abs" style="left:286px;top:492px;width:327px;height:18px;overflow:hidden">
<div class="t" style="left:3px;top:4.18px;font-size:11.6px;color:#000">Pork Back Rib (28-32)</div>
</div>
<div class="abs" style="left:614px;top:492px;width:338px;height:18px;overflow:hidden">
<div class="t" style="left:1px;top:4.18px;font-size:11.6px;color:#000">Back Rib</div>
</div>
<div class="abs" style="left:953px;top:492px;width:97px;height:18px;overflow:hidden">
<div class="t" style="left:3px;top:4.18px;font-size:11.6px;color:#000">Cut</div>
</div>
<div class="abs" style="left:1051px;top:492px;width:65px;height:18px;overflow:hidden">
<div class="t" style="left:3px;top:4.18px;font-size:11.6px;color:#000">Loin</div>
</div>
<div class="abs" style="left:1165px;top:492px;width:87px;height:18px;overflow:hidden">
<div class="t" style="left:3px;top:4.18px;font-size:11.6px;color:#000">Finished Goods</div>
</div>
<div class="abs" style="left:1253px;top:492px;width:80px;height:18px;overflow:hidden">
<div class="t" style="left:3px;top:4.18px;font-size:11.6px;color:#000">Approved</div>
</div>
<div class="abs" style="left:1334px;top:492px;width:90px;height:18px;overflow:hidden">
<div class="t" style="left:3px;top:4.18px;font-size:11.6px;color:#000">Frozen</div>
</div>
<div class="t" style="font-size:11.6px;font-weight:normal;color:#0000ee;top:515.18px;left:241.6px;text-decoration:underline;">28438</div>
<div class="abs" style="left:286px;top:511px;width:327px;height:18px;overflow:hidden">
<div class="t" style="left:3px;top:4.18px;font-size:11.6px;color:#000">Bnls Pork Collar Butt</div>
</div>
<div class="abs" style="left:614px;top:511px;width:338px;height:18px;overflow:hidden">
<div class="t" style="left:1px;top:4.18px;font-size:11.6px;color:#000">Butt - Kata 1/4</div>
</div>
<div class="abs" style="left:953px;top:511px;width:97px;height:18px;overflow:hidden">
<div class="t" style="left:3px;top:4.18px;font-size:11.6px;color:#000">Cut</div>
</div>
<div class="abs" style="left:1051px;top:511px;width:65px;height:18px;overflow:hidden">
<div class="t" style="left:3px;top:4.18px;font-size:11.6px;color:#000">Butt</div>
</div>
<div class="abs" style="left:1165px;top:511px;width:87px;height:18px;overflow:hidden">
<div class="t" style="left:3px;top:4.18px;font-size:11.6px;color:#000">Finished Goods</div>
</div>
<div class="abs" style="left:1253px;top:511px;width:80px;height:18px;overflow:hidden">
<div class="t" style="left:3px;top:4.18px;font-size:11.6px;color:#000">Approved</div>
</div>
<div class="abs" style="left:1334px;top:511px;width:90px;height:18px;overflow:hidden">
<div class="t" style="left:3px;top:4.18px;font-size:11.6px;color:#000">Chilled</div>
</div>
<div class="t" style="font-size:11.6px;font-weight:normal;color:#0000ee;top:534.18px;left:241.6px;text-decoration:underline;">28440</div>
<div class="abs" style="left:286px;top:530px;width:327px;height:18px;overflow:hidden">
<div class="t" style="left:3px;top:4.18px;font-size:11.6px;color:#000">Pork Skinless Tenderloin (SFP)</div>
</div>
<div class="abs" style="left:614px;top:530px;width:338px;height:18px;overflow:hidden">
<div class="t" style="left:1px;top:4.18px;font-size:11.6px;color:#000">Tenderloin - Head Off, Skinned</div>
</div>
<div class="abs" style="left:953px;top:530px;width:97px;height:18px;overflow:hidden">
<div class="t" style="left:3px;top:4.18px;font-size:11.6px;color:#000">Cut</div>
</div>
<div class="abs" style="left:1051px;top:530px;width:65px;height:18px;overflow:hidden">
<div class="t" style="left:3px;top:4.18px;font-size:11.6px;color:#000">Tenderloin</div>
</div>
<div class="abs" style="left:1165px;top:530px;width:87px;height:18px;overflow:hidden">
<div class="t" style="left:3px;top:4.18px;font-size:11.6px;color:#000">Finished Goods</div>
</div>
<div class="abs" style="left:1253px;top:530px;width:80px;height:18px;overflow:hidden">
<div class="t" style="left:3px;top:4.18px;font-size:11.6px;color:#000">Approved</div>
</div>
<div class="abs" style="left:1334px;top:530px;width:90px;height:18px;overflow:hidden">
<div class="t" style="left:3px;top:4.18px;font-size:11.6px;color:#000">Chilled</div>
</div>
<div class="abs" style="left:219px;top:112px;width:1679px;height:1px;background:#555"></div>
<div class="abs" style="left:219px;top:131px;width:1679px;height:1px;background:#151515"></div>
<div class="abs" style="left:219px;top:150px;width:1679px;height:1px;background:#151515"></div>
<div class="abs" style="left:219px;top:169px;width:1679px;height:1px;background:#151515"></div>
<div class="abs" style="left:219px;top:188px;width:1679px;height:1px;background:#151515"></div>
<div class="abs" style="left:219px;top:207px;width:1679px;height:1px;background:#151515"></div>
<div class="abs" style="left:219px;top:226px;width:1679px;height:1px;background:#151515"></div>
<div class="abs" style="left:219px;top:245px;width:1679px;height:1px;background:#151515"></div>
<div class="abs" style="left:219px;top:264px;width:1679px;height:1px;background:#151515"></div>
<div class="abs" style="left:219px;top:283px;width:1679px;height:1px;background:#151515"></div>
<div class="abs" style="left:219px;top:302px;width:1679px;height:1px;background:#151515"></div>
<div class="abs" style="left:219px;top:320px;width:1679px;height:1px;background:#151515"></div>
<div class="abs" style="left:219px;top:339px;width:1679px;height:1px;background:#151515"></div>
<div class="abs" style="left:219px;top:358px;width:1679px;height:1px;background:#151515"></div>
<div class="abs" style="left:219px;top:377px;width:1679px;height:1px;background:#151515"></div>
<div class="abs" style="left:219px;top:396px;width:1679px;height:1px;background:#151515"></div>
<div class="abs" style="left:219px;top:415px;width:1679px;height:1px;background:#151515"></div>
<div class="abs" style="left:219px;top:434px;width:1679px;height:1px;background:#151515"></div>
<div class="abs" style="left:219px;top:453px;width:1679px;height:1px;background:#151515"></div>
<div class="abs" style="left:219px;top:472px;width:1679px;height:1px;background:#151515"></div>
<div class="abs" style="left:219px;top:491px;width:1679px;height:1px;background:#151515"></div>
<div class="abs" style="left:219px;top:510px;width:1679px;height:1px;background:#151515"></div>
<div class="abs" style="left:219px;top:529px;width:1679px;height:1px;background:#151515"></div>
<div class="abs" style="left:219px;top:548px;width:1679px;height:1px;background:#151515"></div>
<div class="abs" style="left:219px;top:112px;width:1px;height:437px;background:#111"></div>
<div class="abs" style="left:239px;top:112px;width:1px;height:437px;background:#111"></div>
<div class="abs" style="left:285px;top:112px;width:1px;height:437px;background:#111"></div>
<div class="abs" style="left:613px;top:112px;width:1px;height:437px;background:#111"></div>
<div class="abs" style="left:952px;top:112px;width:1px;height:437px;background:#111"></div>
<div class="abs" style="left:1050px;top:112px;width:1px;height:437px;background:#111"></div>
<div class="abs" style="left:1116px;top:112px;width:1px;height:437px;background:#111"></div>
<div class="abs" style="left:1164px;top:112px;width:1px;height:437px;background:#111"></div>
<div class="abs" style="left:1252px;top:112px;width:1px;height:437px;background:#111"></div>
<div class="abs" style="left:1333px;top:112px;width:1px;height:437px;background:#111"></div>
<div class="abs" style="left:1424px;top:112px;width:1px;height:437px;background:#111"></div>
<div class="abs" style="left:1898px;top:112px;width:16px;height:437px;background:#efefef"></div>
<div class="abs" style="left:1898px;top:280px;width:16px;height:12px;background:#c6c6c6"></div>
<svg class="abs" style="left:1901px;top:118px" width="11" height="8" viewBox="0 0 11 8" fill="none" stroke="#8a8a8a" stroke-width="1.2"><path d="M1 6.5 L5.5 2 L10 6.5"/></svg>
<svg class="abs" style="left:1901px;top:537px" width="11" height="8" viewBox="0 0 11 8" fill="none" stroke="#8a8a8a" stroke-width="1.2"><path d="M1 1.5 L5.5 6 L10 1.5"/></svg>
<div class="t" style="font-size:11.3px;font-weight:bold;color:#000;top:558.63px;left:218.5px;">Columns:</div>
<div class="abs" style="left:281px;top:556px;width:12px;height:12px;border-radius:50%;border:1px solid #333;background:#fff"></div>
<div class="abs" style="left:284px;top:559px;width:6px;height:6px;border-radius:50%;background:#111"></div>
<div class="t" style="font-size:11.2px;font-weight:normal;color:#000;top:557.82px;left:299.5px;">General</div>
<div class="abs" style="left:351px;top:556px;width:12px;height:12px;border-radius:50%;border:1px solid #333;background:#fff"></div>
<div class="t" style="font-size:11.5px;font-weight:normal;color:#000;top:557.77px;left:369px;">Packaging</div>
<div class="t" style="font-size:11.6px;font-weight:normal;color:#000;top:558.78px;left:1784.4px;font-style:italic;">Total Products Listed: 778</div>
<div class="abs" style="left:212px;top:575px;width:1700px;height:406px;border:7px solid #ff1a00;background:#fff"></div>
<div class="abs" style="left:219px;top:600px;width:1686px;height:1px;background:#acacac"></div>
<div class="abs" style="left:219px;top:582px;width:56px;height:19px;background:linear-gradient(#ececec,#e4e4e4);border:1px solid #acacac;border-top:none"></div>
<div class="t" style="font-size:11.6px;font-weight:normal;color:#000;top:584.78px;left:-53.0px;width:600px;text-align:center;">Base Info</div>
<div class="abs" style="left:275px;top:582px;width:49px;height:19px;background:linear-gradient(#ececec,#e4e4e4);border:1px solid #acacac;border-top:none"></div>
<div class="t" style="font-size:11.6px;font-weight:normal;color:#000;top:584.78px;left:-0.5px;width:600px;text-align:center;">Weight</div>
<div class="abs" style="left:324px;top:582px;width:68.5px;height:19px;background:#fff"></div>
<div class="t" style="font-size:11.6px;font-weight:normal;color:#000;top:583.88px;left:58.25px;width:600px;text-align:center;">Packaging</div>
<div class="abs" style="left:392.5px;top:582px;width:51.0px;height:19px;background:linear-gradient(#ececec,#e4e4e4);border:1px solid #acacac;border-top:none"></div>
<div class="t" style="font-size:11.6px;font-weight:normal;color:#000;top:584.78px;left:118.0px;width:600px;text-align:center;">Storage</div>
<div class="abs" style="left:443.5px;top:582px;width:48.0px;height:19px;background:linear-gradient(#ececec,#e4e4e4);border:1px solid #acacac;border-top:none"></div>
<div class="t" style="font-size:11.6px;font-weight:normal;color:#000;top:584.78px;left:167.5px;width:600px;text-align:center;">Innova</div>
<div class="abs" style="left:491.5px;top:582px;width:81.5px;height:19px;background:linear-gradient(#ececec,#e4e4e4);border:1px solid #acacac;border-top:none"></div>
<div class="t" style="font-size:11.6px;font-weight:normal;color:#000;top:584.78px;left:232.25px;width:600px;text-align:center;">Innova Fields</div>
<div class="abs" style="left:573px;top:582px;width:49px;height:19px;background:linear-gradient(#ececec,#e4e4e4);border:1px solid #acacac;border-top:none"></div>
<div class="t" style="font-size:11.6px;font-weight:normal;color:#000;top:584.78px;left:297.5px;width:600px;text-align:center;">Carlisle</div>
<div class="abs" style="left:622px;top:582px;width:77.5px;height:19px;background:linear-gradient(#ececec,#e4e4e4);border:1px solid #acacac;border-top:none"></div>
<div class="t" style="font-size:11.6px;font-weight:normal;color:#000;top:584.78px;left:360.75px;width:600px;text-align:center;">Box Delivery</div>
<div class="abs" style="left:699.5px;top:582px;width:81.5px;height:19px;background:linear-gradient(#ececec,#e4e4e4);border:1px solid #acacac;border-top:none"></div>
<div class="t" style="font-size:11.6px;font-weight:normal;color:#000;top:584.78px;left:440.25px;width:600px;text-align:center;">Custom Spec</div>
<div class="abs" style="left:781px;top:582px;width:77.70000000000005px;height:19px;background:linear-gradient(#ececec,#e4e4e4);border:1px solid #acacac;border-top:none"></div>
<div class="t" style="font-size:11.6px;font-weight:normal;color:#000;top:584.78px;left:519.85px;width:600px;text-align:center;">Overall Spec</div>
<div class="abs" style="left:858.7px;top:582px;width:58.299999999999955px;height:19px;background:linear-gradient(#ececec,#e4e4e4);border:1px solid #acacac;border-top:none"></div>
<div class="t" style="font-size:11.6px;font-weight:normal;color:#000;top:584.78px;left:587.85px;width:600px;text-align:center;">Planning</div>
<div class="abs" style="left:917px;top:582px;width:68.70000000000005px;height:19px;background:linear-gradient(#ececec,#e4e4e4);border:1px solid #acacac;border-top:none"></div>
<div class="t" style="font-size:11.6px;font-weight:normal;color:#000;top:584.78px;left:651.35px;width:600px;text-align:center;">Comments</div>
<div class="abs" style="left:985.7px;top:582px;width:65.29999999999995px;height:19px;background:linear-gradient(#ececec,#e4e4e4);border:1px solid #acacac;border-top:none"></div>
<div class="t" style="font-size:11.6px;font-weight:normal;color:#000;top:584.78px;left:718.35px;width:600px;text-align:center;">Calculator</div>
<div class="abs" style="left:1051px;top:582px;width:117px;height:19px;background:linear-gradient(#ececec,#e4e4e4);border:1px solid #acacac;border-top:none"></div>
<div class="t" style="font-size:11.6px;font-weight:normal;color:#000;top:584.78px;left:809.5px;width:600px;text-align:center;">Outstanding Orders</div>
<div class="abs" style="left:1168px;top:582px;width:99.40000000000009px;height:19px;background:linear-gradient(#ececec,#e4e4e4);border:1px solid #acacac;border-top:none"></div>
<div class="t" style="font-size:11.6px;font-weight:normal;color:#000;top:584.78px;left:917.7px;width:600px;text-align:center;">File Attachments</div>
<div class="t" style="font-size:11.6px;font-weight:bold;color:#000;top:611.08px;right:1577.5px;text-align:right;">Packaging Config</div>
<div class="tb" style="left:342px;top:605px;width:270px;height:22px;border-color:#abadb3"></div>
<div class="t" style="font-size:11.6px;font-weight:normal;color:#000;top:608.38px;left:345.2px;">1pc/bag,  4bags/ctn</div>
<div class="abs" style="left:219px;top:625.3px;width:119.5px;height:21.200000000000045px;overflow:hidden">
<div class="t" style="right:2.0px;top:10.18px;font-size:11.6px;font-weight:bold;text-align:right;color:#000">Packing Type</div>
</div>
<div class="abs" style="left:342px;top:628px;width:140px;height:19px;background:#efefef;border:1px solid #dadada;border-bottom:none"></div>
<div class="t" style="font-size:11.6px;font-weight:normal;color:#222;top:633.38px;left:348px;">Cryovac</div>
<svg class="abs" style="left:470px;top:635px" width="8" height="5" viewBox="0 0 8 5" fill="none" stroke="#b0b0b0" stroke-width="1"><path d="M0.5 0.5 L4 4 L7.5 0.5"/></svg>
<div class="abs" style="left:219px;top:643.5px;width:119.5px;height:20.299999999999955px;overflow:hidden">
<div class="t" style="right:2.0px;top:10.18px;font-size:11.6px;font-weight:normal;text-align:right;color:#000">Cryovac</div>
</div>
<div class="abs" style="left:343px;top:649px;width:14px;height:13px;background:#e6e6e6;border:1px solid #c4c4c4"></div>
<svg class="abs" style="left:343px;top:649px" width="14" height="13" viewBox="0 0 14 13" fill="none" stroke="#6b6b6b" stroke-width="1.6"><path d="M3 6.6 L5.8 9.6 L11 3"/></svg>
<div class="t" style="font-size:11.6px;font-weight:bold;color:#000;top:672.58px;right:1577.5px;text-align:right;">COV Machine</div>
<div class="abs" style="left:342px;top:665px;width:140px;height:18px;background:#efefef;border:1px solid #dadada;border-bottom:none"></div>
<div class="t" style="font-size:11.6px;font-weight:normal;color:#222;top:670.38px;left:348px;">CryoVac EL2 (South)</div>
<svg class="abs" style="left:470px;top:672px" width="8" height="5" viewBox="0 0 8 5" fill="none" stroke="#b0b0b0" stroke-width="1"><path d="M0.5 0.5 L4 4 L7.5 0.5"/></svg>
<div class="t" style="font-size:11.6px;font-weight:bold;color:#000;top:690.78px;right:1577.5px;text-align:right;">Piece Count</div>
<div class="tb" style="left:342px;top:684px;width:100px;height:22px;border-color:#abadb3"></div>
<div class="t" style="font-size:11.6px;font-weight:normal;color:#000;top:688.48px;left:345.2px;">4</div>
<div class="t" style="font-size:11.6px;font-weight:bold;color:#000;top:715.38px;right:1577.5px;text-align:right;">Estimated Count</div>
<div class="abs" style="left:343px;top:712px;width:14px;height:13px;background:#e6e6e6;border:1px solid #c4c4c4"></div>
<div class="t" style="font-size:11.6px;font-weight:bold;color:#000;top:734.68px;right:1577.5px;text-align:right;">Approx. Piece Count</div>
<div class="tb" style="left:342px;top:729px;width:100px;height:22px;border-color:#c9c9c9"></div>
<div class="t" style="font-size:11.6px;font-weight:normal;color:#9a9a9a;top:732.38px;left:345.2px;">0</div>
<div class="t" style="font-size:11.6px;font-weight:bold;color:#000;top:759.78px;right:1577.5px;text-align:right;">Chinese Inner Label</div>
<div class="abs" style="left:343px;top:755px;width:14px;height:13px;background:#e6e6e6;border:1px solid #c4c4c4"></div>
<div class="t" style="font-size:11.6px;font-weight:bold;color:#000;top:777.58px;right:1577.5px;text-align:right;">Chinese Outer Label</div>
<div class="abs" style="left:343px;top:773px;width:14px;height:13px;background:#e6e6e6;border:1px solid #c4c4c4"></div>
<div class="t" style="font-size:11.6px;font-weight:bold;color:#000;top:796.88px;right:1577.5px;text-align:right;">Symbol</div>
<div class="tb" style="left:342px;top:790px;width:270px;height:23px;border-color:#abadb3"></div>
<div class="t" style="font-size:11.6px;font-weight:bold;color:#000;top:821.48px;right:1577.5px;text-align:right;">PLU Symbol</div>
<div class="tb" style="left:342px;top:815px;width:270px;height:23px;border-color:#abadb3"></div>
<div class="t" style="font-size:11.6px;font-weight:normal;color:#000;top:819.18px;left:345.2px;">AAW1</div>
<div class="t" style="font-size:11.6px;font-weight:normal;color:#000;top:846.58px;right:1577.5px;text-align:right;">Pallet Config</div>
<div class="tb" style="left:342px;top:841px;width:270px;height:22px;border-color:#abadb3"></div>
<div class="t" style="font-size:11.6px;font-weight:normal;color:#000;top:844.38px;left:345.2px;">6 ctns/layer,  5 layers/pallet, 30 ctns/pallet</div>
<div class="abs" style="left:219px;top:861.2px;width:119.5px;height:20.799999999999955px;overflow:hidden">
<div class="t" style="right:2.0px;top:10.18px;font-size:11.6px;font-weight:bold;text-align:right;color:#000">No Packaging BOM</div>
</div>
<div class="abs" style="left:343px;top:867px;width:14px;height:13px;background:#e6e6e6;border:1px solid #c4c4c4"></div>
<div class="abs" style="left:219px;top:879.2px;width:119.5px;height:20.59999999999991px;overflow:hidden">
<div class="t" style="right:2.0px;top:10.18px;font-size:11.6px;font-weight:normal;text-align:right;color:#000">Override Pallet Config</div>
</div>
<div class="abs" style="left:343px;top:885px;width:14px;height:13px;background:#e6e6e6;border:1px solid #c4c4c4"></div>
<div class="abs" style="left:219px;top:898.1px;width:119.5px;height:20.399999999999977px;overflow:hidden">
<div class="t" style="right:2.0px;top:10.18px;font-size:11.6px;font-weight:bold;text-align:right;color:#000">COV Bag BB Stamp</div>
</div>
<div class="abs" style="left:343px;top:904px;width:14px;height:13px;background:#e6e6e6;border:1px solid #c4c4c4"></div>
<div class="abs" style="left:219px;top:916.3px;width:119.5px;height:21.100000000000023px;overflow:hidden">
<div class="t" style="right:2.0px;top:10.18px;font-size:11.6px;font-weight:bold;text-align:right;color:#000">X-Ray Required</div>
</div>
<div class="abs" style="left:343px;top:922px;width:14px;height:13px;background:#e6e6e6;border:1px solid #c4c4c4"></div>
<div class="t" style="font-size:11.6px;font-weight:bold;color:#000;top:866.48px;right:1390px;text-align:right;">Pallet Config Not Required</div>
<div class="abs" style="left:530px;top:867px;width:14px;height:13px;background:#e6e6e6;border:1px solid #c4c4c4"></div>
<div class="t" style="font-size:11.6px;font-weight:bold;color:#000;top:885.78px;right:1390px;text-align:right;">Metal Detection Required</div>
<div class="abs" style="left:530px;top:885px;width:14px;height:13px;background:#e6e6e6;border:1px solid #c4c4c4"></div>
<svg class="abs" style="left:530px;top:885px" width="14" height="13" viewBox="0 0 14 13" fill="none" stroke="#6b6b6b" stroke-width="1.6"><path d="M3 6.6 L5.8 9.6 L11 3"/></svg>
<div class="abs" style="left:632px;top:603px;width:532px;height:124px;border:1px solid #8aa2bf;background:#e9e9e9"></div>
<div class="abs" style="left:633px;top:604px;width:530px;height:21px;background:#eeeeee"></div>
<div class="t" style="font-size:11.6px;font-weight:normal;color:#111;top:610.18px;left:636px;">Item Number</div>
<div class="abs" style="left:754px;top:604px;width:1px;height:21px;background:#d4d4d4"></div>
<div class="t" style="font-size:11.6px;font-weight:normal;color:#111;top:610.18px;left:757px;">Type</div>
<div class="abs" style="left:822px;top:604px;width:1px;height:21px;background:#d4d4d4"></div>
<div class="t" style="font-size:11.6px;font-weight:normal;color:#111;top:610.18px;left:825px;">Description</div>
<div class="abs" style="left:958px;top:604px;width:1px;height:21px;background:#d4d4d4"></div>
<div class="t" style="font-size:11.6px;font-weight:normal;color:#111;top:610.18px;left:961px;">Qty</div>
<div class="abs" style="left:1026px;top:604px;width:1px;height:21px;background:#d4d4d4"></div>
<div class="t" style="font-size:11.6px;font-weight:normal;color:#111;top:610.18px;left:1029px;">Tare</div>
<div class="abs" style="left:1094px;top:604px;width:1px;height:21px;background:#d4d4d4"></div>
<div class="t" style="font-size:11.6px;font-weight:normal;color:#111;top:610.18px;left:1097px;">Cost</div>
<div class="abs" style="left:633px;top:625px;width:530px;height:19px;background:#fff"></div>
<div class="abs" style="left:634px;top:626px;width:120px;height:18px;overflow:hidden">
<div class="t" style="left:2.5px;top:4.18px;font-size:11.6px;color:#000">76-234</div>
</div>
<div class="abs" style="left:755px;top:626px;width:67px;height:18px;overflow:hidden">
<div class="t" style="left:2px;top:4.18px;font-size:11.6px;color:#000">Tare Weight</div>
</div>
<div class="abs" style="left:823px;top:626px;width:135px;height:18px;overflow:hidden">
<div class="t" style="left:2px;top:4.18px;font-size:11.6px;color:#000">TARE WEIGHT GIVEAWAY</div>
</div>
<div class="abs" style="left:959px;top:626px;width:67px;height:18px;overflow:hidden">
<div class="t" style="left:2px;top:4.18px;font-size:11.6px;color:#000">1</div>
</div>
<div class="abs" style="left:1027px;top:626px;width:67px;height:18px;overflow:hidden">
<div class="t" style="left:2px;top:4.18px;font-size:11.6px;color:#000">0.020 kg</div>
</div>
<div class="abs" style="left:1095px;top:626px;width:67px;height:18px;overflow:hidden">
<div class="t" style="left:2px;top:4.18px;font-size:11.6px;color:#000">0.000</div>
</div>
<div class="abs" style="left:633px;top:644px;width:530px;height:19px;background:#cfcfcf"></div>
<div class="abs" style="left:634px;top:645px;width:120px;height:18px;overflow:hidden">
<div class="t" style="left:2.5px;top:4.18px;font-size:11.6px;color:#000">49-248</div>
</div>
<div class="abs" style="left:755px;top:645px;width:67px;height:18px;overflow:hidden">
<div class="t" style="left:2px;top:4.18px;font-size:11.6px;color:#000">Divider</div>
</div>
<div class="abs" style="left:823px;top:645px;width:135px;height:18px;overflow:hidden">
<div class="t" style="left:2px;top:4.18px;font-size:11.6px;color:#000">DIVIDER 49-248</div>
</div>
<div class="abs" style="left:959px;top:645px;width:67px;height:18px;overflow:hidden">
<div class="t" style="left:2px;top:4.18px;font-size:11.6px;color:#000">1</div>
</div>
<div class="abs" style="left:1027px;top:645px;width:67px;height:18px;overflow:hidden">
<div class="t" style="left:2px;top:4.18px;font-size:11.6px;color:#000">0.170 kg</div>
</div>
<div class="abs" style="left:1095px;top:645px;width:67px;height:18px;overflow:hidden">
<div class="t" style="left:2px;top:4.18px;font-size:11.6px;color:#000">0.373</div>
</div>
<div class="abs" style="left:633px;top:663px;width:530px;height:19px;background:#fff"></div>
<div class="abs" style="left:634px;top:664px;width:120px;height:18px;overflow:hidden">
<div class="t" style="left:2.5px;top:4.18px;font-size:11.6px;color:#000">93-566</div>
</div>
<div class="abs" style="left:755px;top:664px;width:67px;height:18px;overflow:hidden">
<div class="t" style="left:2px;top:4.18px;font-size:11.6px;color:#000">COV Film</div>
</div>
<div class="abs" style="left:823px;top:664px;width:135px;height:18px;overflow:hidden">
<div class="t" style="left:2px;top:4.18px;font-size:11.6px;color:#000">COV FILM 93-566</div>
</div>
<div class="abs" style="left:959px;top:664px;width:67px;height:18px;overflow:hidden">
<div class="t" style="left:2px;top:4.18px;font-size:11.6px;color:#000">3344</div>
</div>
<div class="abs" style="left:1027px;top:664px;width:67px;height:18px;overflow:hidden">
<div class="t" style="left:2px;top:4.18px;font-size:11.6px;color:#000">0.148 kg</div>
</div>
<div class="abs" style="left:1095px;top:664px;width:67px;height:18px;overflow:hidden">
<div class="t" style="left:2px;top:4.18px;font-size:11.6px;color:#000">3.069</div>
</div>
<div class="abs" style="left:633px;top:682px;width:530px;height:19px;background:#cfcfcf"></div>
<div class="abs" style="left:634px;top:683px;width:120px;height:18px;overflow:hidden">
<div class="t" style="left:2.5px;top:4.18px;font-size:11.6px;color:#000">50-604</div>
</div>
<div class="abs" style="left:755px;top:683px;width:67px;height:18px;overflow:hidden">
<div class="t" style="left:2px;top:4.18px;font-size:11.6px;color:#000">Box</div>
</div>
<div class="abs" style="left:823px;top:683px;width:135px;height:18px;overflow:hidden">
<div class="t" style="left:2px;top:4.18px;font-size:11.6px;color:#000">BOX 50-604</div>
</div>
<div class="abs" style="left:959px;top:683px;width:67px;height:18px;overflow:hidden">
<div class="t" style="left:2px;top:4.18px;font-size:11.6px;color:#000">1</div>
</div>
<div class="abs" style="left:1027px;top:683px;width:67px;height:18px;overflow:hidden">
<div class="t" style="left:2px;top:4.18px;font-size:11.6px;color:#000">0.978 kg</div>
</div>
<div class="abs" style="left:1095px;top:683px;width:67px;height:18px;overflow:hidden">
<div class="t" style="left:2px;top:4.18px;font-size:11.6px;color:#000">2.283</div>
</div>
<div class="abs" style="left:633px;top:701px;width:530px;height:19px;background:#fff"></div>
<div class="abs" style="left:634px;top:702px;width:120px;height:18px;overflow:hidden">
<div class="t" style="left:2.5px;top:4.18px;font-size:11.6px;color:#000">57-619</div>
</div>
<div class="abs" style="left:755px;top:702px;width:67px;height:18px;overflow:hidden">
<div class="t" style="left:2px;top:4.18px;font-size:11.6px;color:#000">COV Film Tr</div>
</div>
<div class="abs" style="left:823px;top:702px;width:135px;height:18px;overflow:hidden">
<div class="t" style="left:2px;top:4.18px;font-size:11.6px;color:#000">COV FILM TRIM 57-619</div>
</div>
<div class="abs" style="left:959px;top:702px;width:67px;height:18px;overflow:hidden">
<div class="t" style="left:2px;top:4.18px;font-size:11.6px;color:#000">4</div>
</div>
<div class="abs" style="left:1027px;top:702px;width:67px;height:18px;overflow:hidden">
<div class="t" style="left:2px;top:4.18px;font-size:11.6px;color:#000">-0.027 kg</div>
</div>
<div class="abs" style="left:1095px;top:702px;width:67px;height:18px;overflow:hidden">
<div class="t" style="left:2px;top:4.18px;font-size:11.6px;color:#000">0.000</div>
</div>
<div class="abs" style="left:633px;top:625px;width:530px;height:1px;background:#111"></div>
<div class="abs" style="left:633px;top:644px;width:530px;height:1px;background:#111"></div>
<div class="abs" style="left:633px;top:663px;width:530px;height:1px;background:#111"></div>
<div class="abs" style="left:633px;top:682px;width:530px;height:1px;background:#111"></div>
<div class="abs" style="left:633px;top:701px;width:530px;height:1px;background:#111"></div>
<div class="abs" style="left:633px;top:720px;width:530px;height:1px;background:#111"></div>
<div class="abs" style="left:633px;top:625px;width:1px;height:96px;background:#111"></div>
<div class="abs" style="left:754px;top:625px;width:1px;height:96px;background:#111"></div>
<div class="abs" style="left:822px;top:625px;width:1px;height:96px;background:#111"></div>
<div class="abs" style="left:958px;top:625px;width:1px;height:96px;background:#111"></div>
<div class="abs" style="left:1026px;top:625px;width:1px;height:96px;background:#111"></div>
<div class="abs" style="left:1094px;top:625px;width:1px;height:96px;background:#111"></div>
<div class="abs" style="left:1162px;top:625px;width:1px;height:96px;background:#111"></div>
<svg class="abs" style="left:635px;top:735px" width="17" height="10" viewBox="0 0 17 10"><circle cx="5.3" cy="5" r="4.3" fill="#8e9cb0"/><circle cx="11.8" cy="5" r="4.3" fill="#8e9cb0"/><circle cx="5.3" cy="5" r="2.2" fill="#c3ccd8"/><circle cx="11.8" cy="5" r="2.2" fill="#c3ccd8"/><rect x="4.5" y="4.2" width="8" height="1.8" fill="#4f5d70"/></svg>
<div class="t" style="font-size:11.6px;font-weight:normal;color:#000;top:733.58px;left:655px;">View Packaging BOM</div>
<div class="t" style="font-size:11.6px;font-weight:normal;color:#000;top:755.98px;right:901.3px;text-align:right;">Total Packaging Cost (CAD)</div>
<div class="abs" style="left:1014px;top:752px;width:150px;height:20px;border:1px solid #c8c8c8;background:#fff"></div>
<div class="t" style="font-size:11.6px;font-weight:normal;color:#000;top:755.98px;left:1017px;">5.724</div>
<div class="t" style="font-size:11.6px;font-weight:normal;color:#000;top:774.98px;right:901.3px;text-align:right;">Total Tare Weight (kg)</div>
<div class="abs" style="left:1014px;top:771px;width:150px;height:20px;border:1px solid #c8c8c8;background:#fff"></div>
<div class="t" style="font-size:11.6px;font-weight:normal;color:#000;top:774.98px;left:1017px;">1.290</div>
<div class="t" style="font-size:11.6px;font-weight:normal;color:#000;top:795.78px;right:901.3px;text-align:right;">Packaging Cost CAD/kg</div>
<div class="abs" style="left:1014px;top:791px;width:150px;height:22px;border:1px solid #c8c8c8;background:#fff"></div>
<div class="t" style="font-size:11.6px;font-weight:normal;color:#000;top:793.58px;left:1017px;">$0.330</div>
</body></html>
